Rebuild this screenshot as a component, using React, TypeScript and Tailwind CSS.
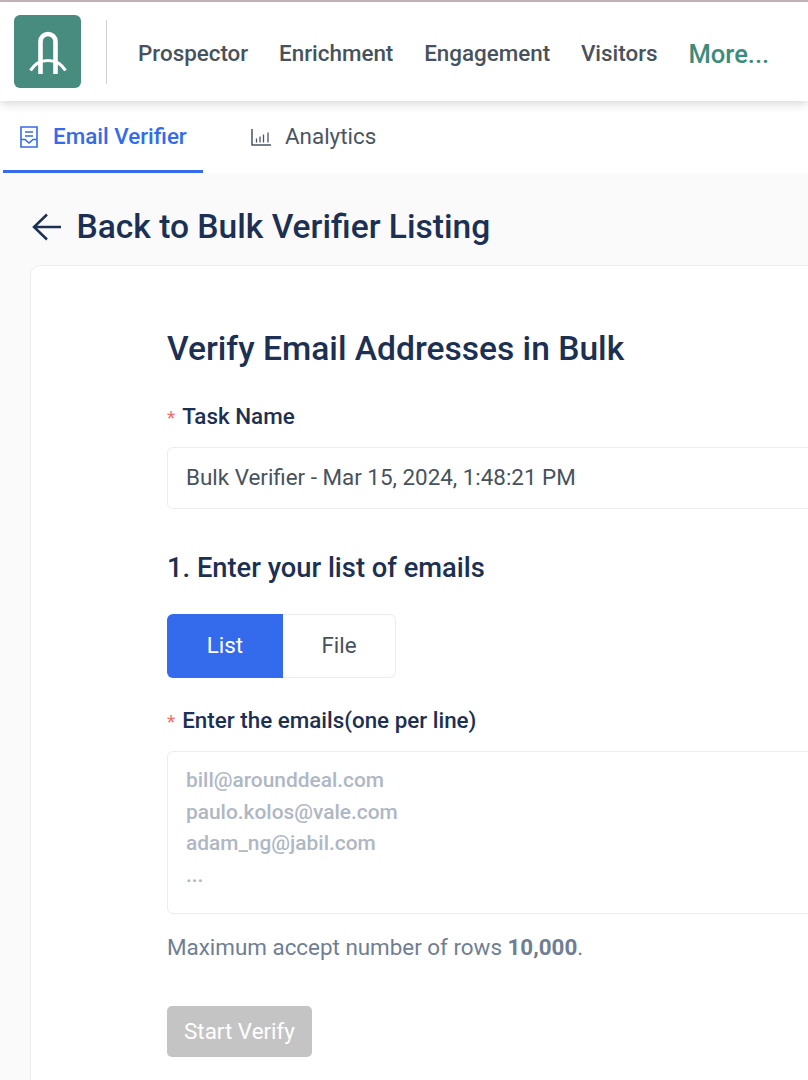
import React from "react";

function Logo() {
  return (
    <div className="w-[67px] h-[73px] rounded-[6px] bg-[#478c7f] flex items-center justify-center shrink-0">
      <svg width="38" height="46" viewBox="0 0 38 46" fill="none" stroke="#fff" strokeWidth="4.600" className="mt-[3px]">
        <path d="M11.500 44V11.500a7.500 7.500 0 0 1 15 0V44" />
        <path d="M1.500 40.500c4-6.500 10-10 17.500-10s13.500 3.500 17.500 10" strokeWidth="3.200" />
      </svg>
    </div>
  );
}

function VerifierIcon() {
  return (
    <svg width="18" height="22" viewBox="0 0 18 22" fill="none" stroke="#346bec" strokeWidth="1.600">
      <path d="M1 1h16v20H1z" />
      <path d="M5 6h8M5 10h8M1 13.500h4l4 3.500 4-3.500h4" />
    </svg>
  );
}

function ChartIcon() {
  return (
    <svg width="20" height="17" viewBox="0 0 20 17" fill="none" stroke="#4a5563" strokeWidth="1.300">
      <path d="M1 0v16h19" strokeWidth="1.500" />
      <path d="M5.500 13.500V9.500M9 13.500V7.500M12.500 13.500V5.500M17 13.500V3.500" />
    </svg>
  );
}

export default function App() {
  return (
    <div className="w-[808px] h-[1080px] overflow-hidden bg-[#fafafb] font-['Roboto',sans-serif]">
      <div className="h-[2px] bg-[#cbbabd]" />
      <header className="relative z-10 h-[99px] bg-white shadow-[0_2px_10px_rgba(0,0,0,0.18)] flex items-center pl-[14px]">
        <Logo />
        <div className="w-px h-[64px] bg-[#cfd1d3] ml-[25px] mr-[31px]" />
        <nav className="flex items-center gap-[30.800px] pt-[5px] text-[22.400px] font-medium text-[#47525c] whitespace-nowrap">
          <span>Prospector</span>
          <span>Enrichment</span>
          <span>Engagement</span>
          <span>Visitors</span>
          <span className="text-[#3d8b7c] text-[25.600px]">More...</span>
        </nav>
      </header>

      <div className="h-[72px] bg-white flex items-stretch pl-[3px] text-[22.400px] whitespace-nowrap">
        <div className="w-[200px] border-b-[3px] border-[#346bec] flex items-center pl-[17px] pt-[3px] gap-[15px] text-[#346bec] font-medium">
          <VerifierIcon />
          <span>Email Verifier</span>
        </div>
        <div className="flex items-center pl-[48px] gap-[14px] text-[#4a5563]">
          <ChartIcon />
          <span>Analytics</span>
        </div>
      </div>

      <div className="pl-[30px]">
        <div className="h-[92px] flex items-center pl-[2px] pt-[16px] gap-[14.500px] text-[#1c3053]">
          <svg width="30" height="28" viewBox="0 0 30 28" fill="none" stroke="#1c3053" strokeWidth="2.500">
            <path d="M29 14H2M15 1.500 2 14l13 12.500" />
          </svg>
          <h1 className="text-[33.600px] font-medium whitespace-nowrap">Back to Bulk Verifier Listing</h1>
        </div>

        <div className="w-[900px] h-[900px] bg-white border border-[#ebedf2] rounded-[10px] pl-[136px]">
          <h2 className="mt-[61px] text-[33.600px] leading-[44px] font-medium text-[#1c3053] whitespace-nowrap">
            Verify Email Addresses in Bulk
          </h2>
          <label className="block mt-[31px] text-[22.400px] leading-[28px] font-medium text-[#1c3053]">
            <span className="text-[#f26d6d] text-[19px] font-normal mr-[7px]">*</span>Task Name
          </label>
          <div className="mt-[15px] h-[62px] border border-[#ebedf2] rounded-[6px] flex items-center pl-[18px] text-[22.400px] text-[#47525c] whitespace-nowrap">
            Bulk Verifier - Mar 15, 2024, 1:48:21 PM
          </div>
          <h3 className="mt-[41px] text-[27.300px] leading-[36px] font-medium text-[#1c3053]">
            1. Enter your list of emails
          </h3>
          <div className="mt-[28px] flex h-[64px] w-[229px] text-[22.400px]">
            <div className="w-[116px] bg-[#346bec] text-white rounded-l-[6px] flex items-center justify-center">List</div>
            <div className="w-[113px] border border-l-0 border-[#ebedf2] rounded-r-[6px] text-[#47525c] flex items-center justify-center">File</div>
          </div>
          <label className="block mt-[28px] text-[22.400px] leading-[28px] font-medium text-[#1c3053]">
            <span className="text-[#f26d6d] text-[19px] font-normal mr-[7px]">*</span>Enter the emails(one per line)
          </label>
          <div className="mt-[15px] h-[163px] border border-[#ebedf2] rounded-[6px] pl-[18px] pt-[13px] text-[20.900px] leading-[31.600px] font-medium text-[#afb7c5]">
            <div>bill@arounddeal.com</div>
            <div>paulo.kolos@vale.com</div>
            <div>adam_ng@jabil.com</div>
            <div>...</div>
          </div>
          <p className="mt-[19px] text-[22.400px] leading-[28px] text-[#6f7e94]">
            Maximum accept number of rows <b className="font-bold">10,000</b>.
          </p>
          <div className="mt-[45px] w-[145px] h-[51px] rounded-[5px] bg-[#c4c4c4] text-white text-[22.400px] flex items-center justify-center">
            Start Verify
          </div>
        </div>
      </div>
    </div>
  );
}
